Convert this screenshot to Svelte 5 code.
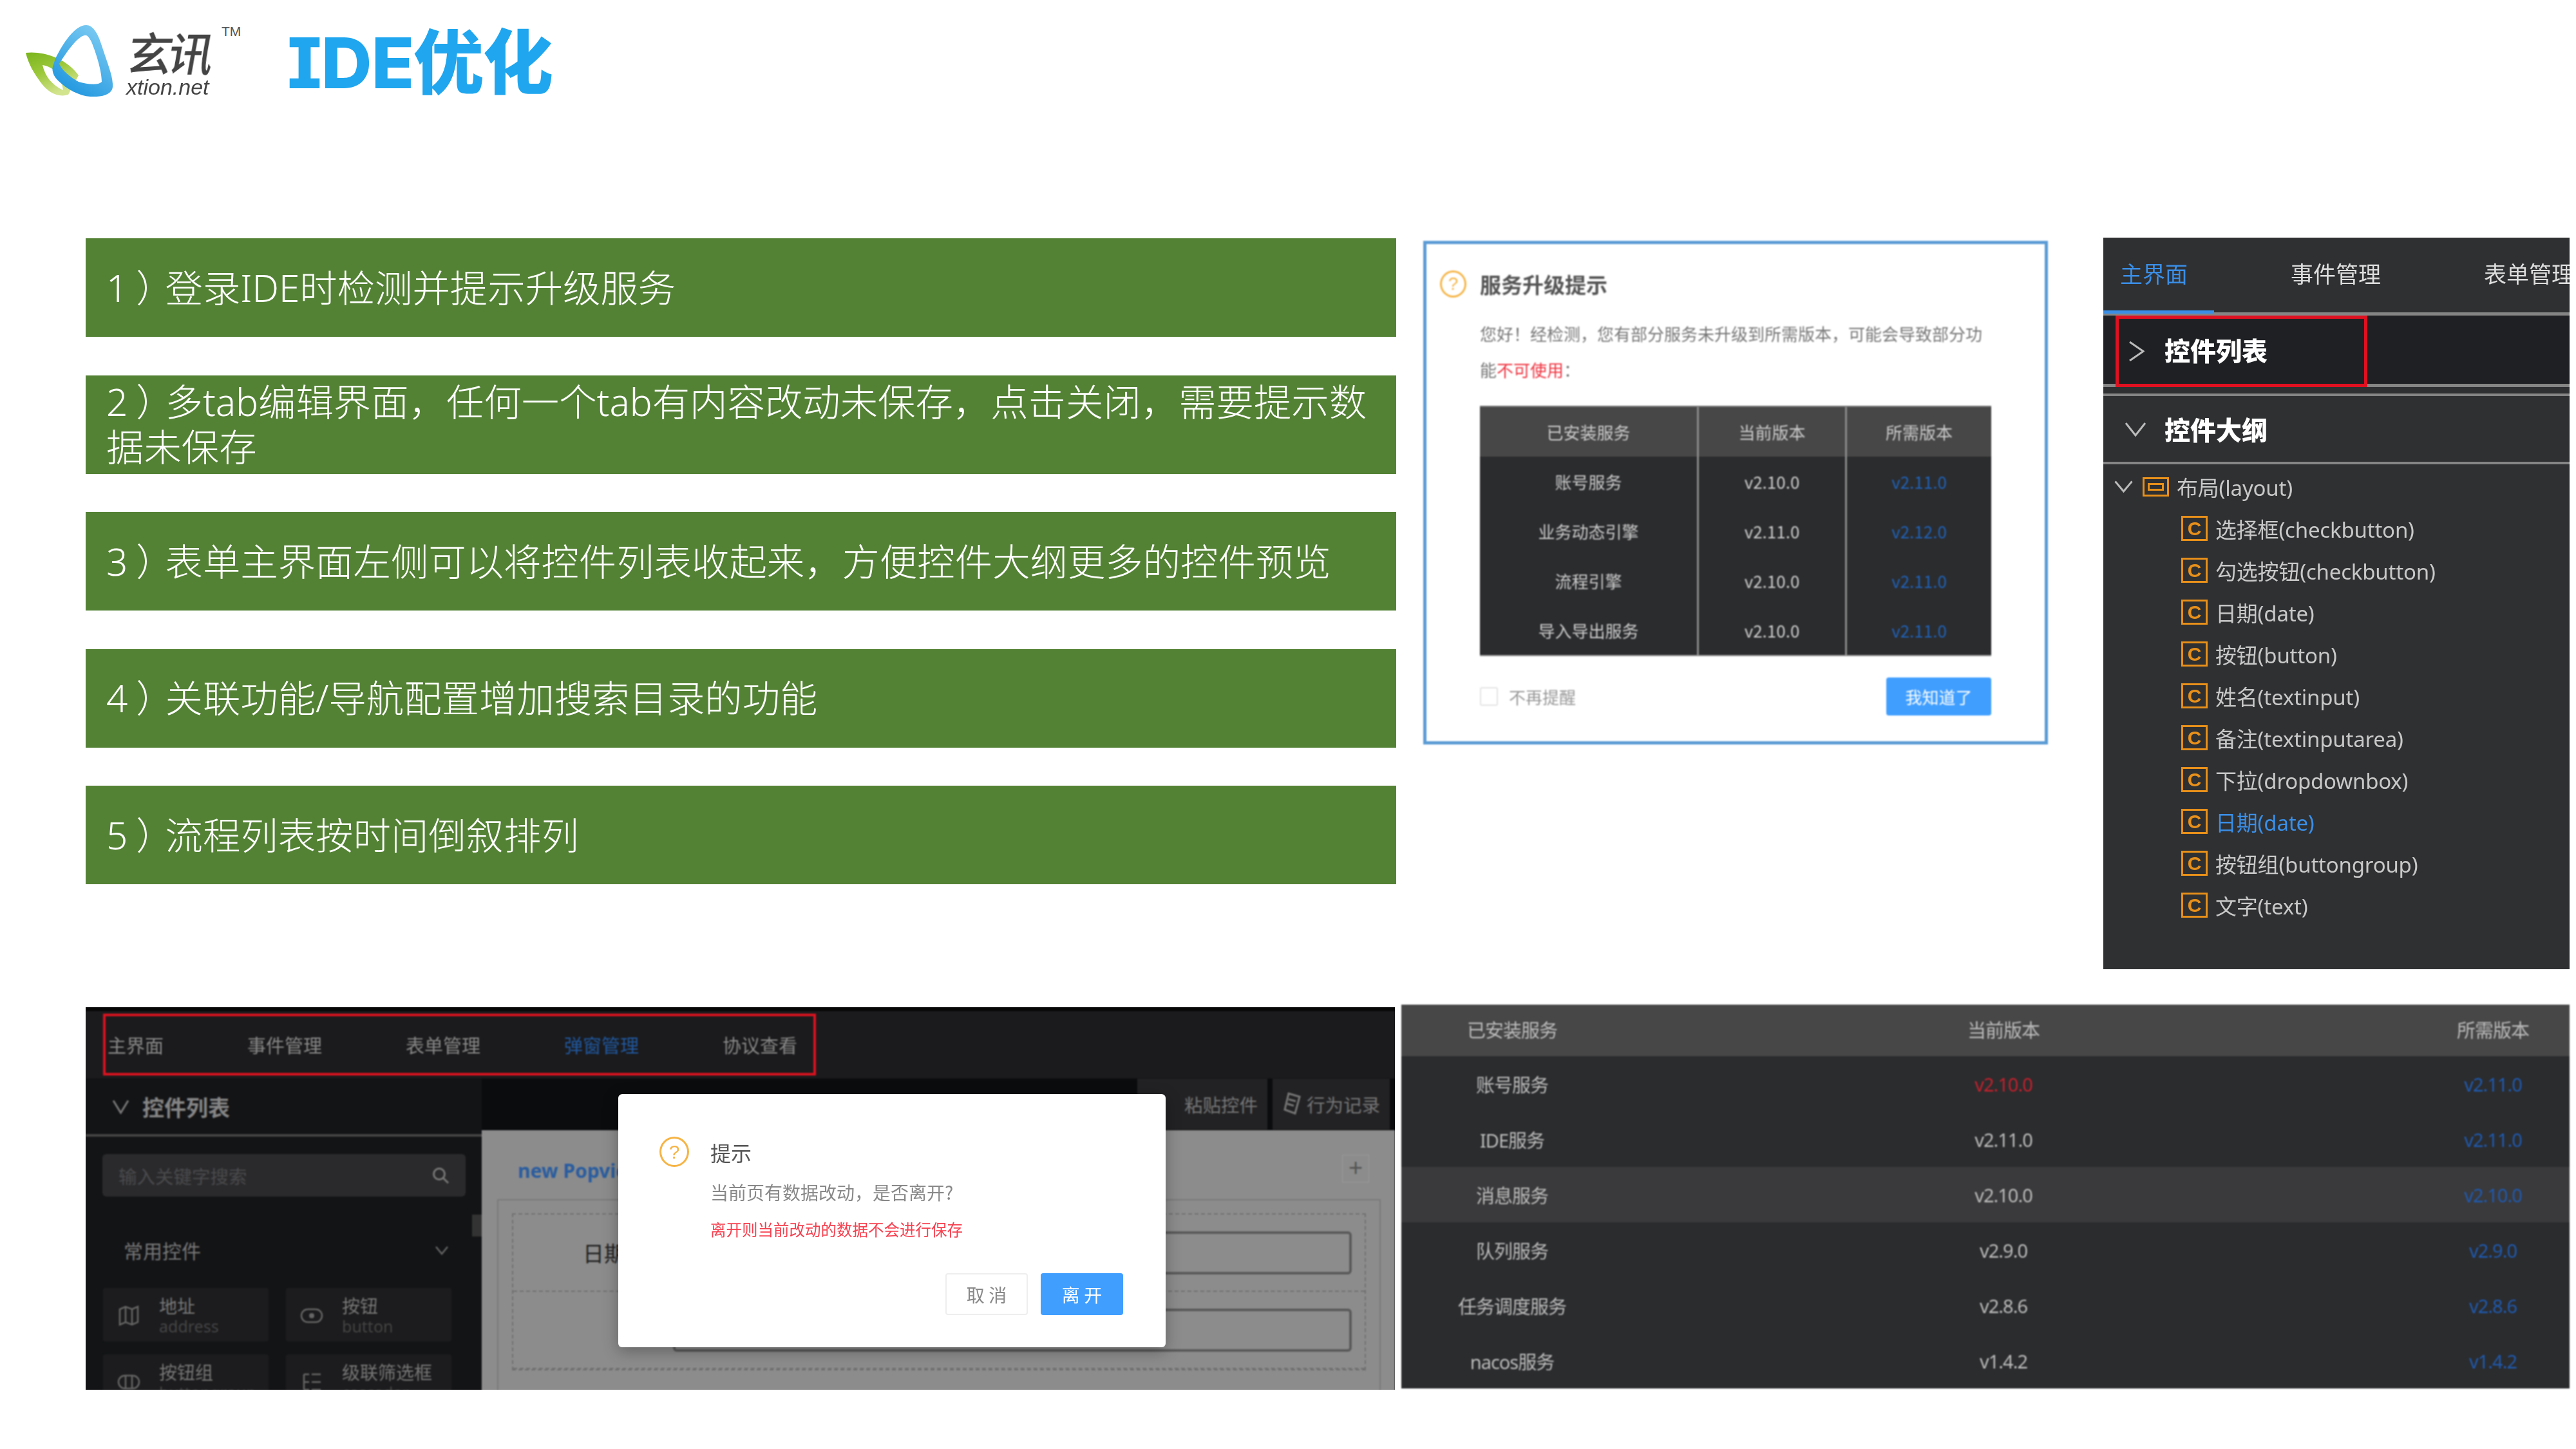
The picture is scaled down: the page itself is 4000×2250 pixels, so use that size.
<script>
  const points = [
    ['1', '登录IDE时检测并提示升级服务'],
    ['2', '多tab编辑界面，任何一个tab有内容改动未保存，点击关闭，需要提示数据未保存'],
    ['3', '表单主界面左侧可以将控件列表收起来，方便控件大纲更多的控件预览'],
    ['4', '关联功能/导航配置增加搜索目录的功能'],
    ['5', '流程列表按时间倒叙排列']
  ];
  const upgradeRows = [
    ['账号服务', 'v2.10.0', 'v2.11.0'],
    ['业务动态引擎', 'v2.11.0', 'v2.12.0'],
    ['流程引擎', 'v2.10.0', 'v2.11.0'],
    ['导入导出服务', 'v2.10.0', 'v2.11.0']
  ];
  const outline = [
    '选择框(checkbutton)', '勾选按钮(checkbutton)', '日期(date)', '按钮(button)',
    '姓名(textinput)', '备注(textinputarea)', '下拉(dropdownbox)', '日期(date)',
    '按钮组(buttongroup)', '文字(text)'
  ];
  const topTabs = ['主界面', '事件管理', '表单管理', '弹窗管理', '协议查看'];
  const cards = [
    ['地址', 'address', 'map'], ['按钮', 'button', 'btn'],
    ['按钮组', 'buttongroup', 'group'], ['级联筛选框', 'cascader', 'tree']
  ];
  const services = [
    ['账号服务', 'v2.10.0', 'v2.11.0', 'err'],
    ['IDE服务', 'v2.11.0', 'v2.11.0', ''],
    ['消息服务', 'v2.10.0', 'v2.10.0', 'hl'],
    ['队列服务', 'v2.9.0', 'v2.9.0', ''],
    ['任务调度服务', 'v2.8.6', 'v2.8.6', ''],
    ['nacos服务', 'v1.4.2', 'v1.4.2', '']
  ];
</script>

<div class="slide">
  <header class="head">
    <svg class="mark" viewBox="0 0 135 111" aria-hidden="true">
      <defs>
        <linearGradient id="gr" x1="0" y1="0" x2="0.5" y2="1">
          <stop offset="0" stop-color="#7ab51d" />
          <stop offset="0.5" stop-color="#9cc83a" />
          <stop offset="1" stop-color="#d3e48f" />
        </linearGradient>
        <linearGradient id="bl" x1="0.2" y1="1" x2="0.8" y2="0">
          <stop offset="0" stop-color="#1b93de" />
          <stop offset="1" stop-color="#7fcdf3" />
        </linearGradient>
      </defs>
      <path class="m-green" fill-rule="evenodd" d="M0 43C25 40 62 50 82 78L66 108C50 113 34 104 24 90C12 74 4 60 0 43ZM26 62C30 80 42 94 58 101L55 84C50 72 38 64 26 62Z" />
      <path class="m-blue" fill-rule="evenodd" d="M94 0C104 0 112 12 118 32C127 60 136 80 135 96C134 108 118 112 100 111C84 110 64 100 50 86C44 80 40 72 42 64L46 52C58 28 76 0 94 0ZM91 16C80 18 62 44 52 60C56 70 68 80 82 88C96 92 112 94 118 88C118 70 108 40 102 26C98 18 95 15 91 16Z" />
    </svg>
    <div class="brand">
      <span class="brand-cn">玄讯</span>
      <span class="brand-en">xtion.net</span>
    </div>
    <span class="tm">TM</span>
    <h1 class="title">IDE优化</h1>
  </header>

  <section class="upper">
    <ul class="bars">
      {#each points as p}
        <li class="bar"><div>{p[0]}<i class="par">）</i>{p[1]}</div></li>
      {/each}
    </ul>

    <article class="upgrade">
      <div class="up-head">
        <span class="q up-q">?</span>
        <strong>服务升级提示</strong>
      </div>
      <p class="up-desc">您好！经检测，您有部分服务未升级到所需版本，可能会导致部分功能<em>不可使用</em>：</p>
      <div class="up-table">
        <div class="up-row up-th"><span>已安装服务</span><span>当前版本</span><span>所需版本</span></div>
        {#each upgradeRows as r}
          <div class="up-row"><span>{r[0]}</span><span>{r[1]}</span><span class="blue">{r[2]}</span></div>
        {/each}
      </div>
      <div class="up-foot">
        <span class="check"></span>
        <span class="no-remind">不再提醒</span>
        <span class="know">我知道了</span>
      </div>
    </article>

    <aside class="panel">
      <div class="p-tabs">
        <span class="p-tab active">主界面</span>
        <span class="p-tab">事件管理</span>
        <span class="p-tab third">表单管理</span>
      </div>
      <div class="p-sec dark">
        <div class="p-red">
          <svg class="chev-r" viewBox="0 0 25 33"><path d="M2 2L23 16.500L2 31" /></svg>
          <b>控件列表</b>
        </div>
      </div>
      <div class="p-sec second">
        <svg class="chev-d" viewBox="0 0 34 23"><path d="M2 2L17 21L32 2" /></svg>
        <b>控件大纲</b>
      </div>
      <div class="tree">
        <div class="t-row root">
          <svg class="chev-s" viewBox="0 0 29 19"><path d="M1.500 1.500L14.500 17L27.500 1.500" /></svg>
          <span class="lay"><i></i></span>
          <span>布局(layout)</span>
        </div>
        {#each outline as o, i}
          <div class="t-row leaf" class:sel={i === 7}>
            <span class="c">C</span>
            <span>{o}</span>
          </div>
        {/each}
      </div>
    </aside>
  </section>

  <section class="lower">
    <div class="shot">
      <div class="s-top">
        <div class="s-red">
          {#each topTabs as t, i}
            <span class:on={i === 3}>{t}</span>
          {/each}
        </div>
      </div>
      <div class="s-body">
        <div class="side">
          <div class="side-h">
            <svg viewBox="0 0 27 23"><path d="M2 2L13.500 21L25 2" /></svg>
            <b>控件列表</b>
          </div>
          <div class="search">
            <span>输入关键字搜索</span>
            <svg viewBox="0 0 27 27"><circle cx="11" cy="11" r="8.500" /><path d="M17 17L25 25" /></svg>
          </div>
          <div class="common">
            <span>常用控件</span>
            <svg viewBox="0 0 22 15"><path d="M2 2L11 13L20 2" /></svg>
          </div>
          <div class="cards">
            {#each cards as c}
              <div class="card">
                <svg class="card-i" viewBox="0 0 36 36">
                  {#if c[2] === 'map'}
                    <path d="M4 8L13 4L23 8L32 4V28L23 32L13 28L4 32ZM13 4V28M23 8V32" />
                  {:else if c[2] === 'btn'}
                    <rect x="2" y="8" width="32" height="20" rx="10" /><circle cx="18" cy="18" r="4" class="fill" />
                  {:else if c[2] === 'group'}
                    <rect x="2" y="8" width="32" height="20" rx="10" /><path d="M13 8V28M23 8V28" />
                  {:else}
                    <path d="M6 6H14M6 6V30M6 18H14M6 30H14M18 6H32M18 18H32M18 30H32" />
                  {/if}
                </svg>
                <div class="card-t"><span>{c[0]}</span><small>{c[1]}</small></div>
              </div>
            {/each}
          </div>
          <span class="thumb"></span>
        </div>
        <div class="work">
          <div class="tools">
            <span class="tool wide">粘贴控件</span>
            <span class="tool">
              <svg viewBox="0 0 30 40"><path d="M10 3L27 8L20 34L4 28ZM10 12L21 15M8 19L18 22" /></svg>
              行为记录
            </span>
          </div>
          <div class="canvas">
            <div class="canvas-h">
              <b>new Popview</b>
              <span class="plus">+</span>
            </div>
            <div class="frame">
              <div class="dash">
                <div class="f-row"><span class="f-label">日期</span><span class="f-input"></span></div>
                <div class="f-row"><span class="f-label"></span><span class="f-input"></span></div>
              </div>
            </div>
          </div>
        </div>
      </div>
      <div class="modal">
        <div class="m-head"><span class="q m-q">?</span><span>提示</span></div>
        <p class="m-text">当前页有数据改动，是否离开?</p>
        <p class="m-warn">离开则当前改动的数据不会进行保存</p>
        <div class="m-btns">
          <span class="m-cancel">取 消</span>
          <span class="m-ok">离 开</span>
        </div>
      </div>
    </div>

    <div class="svc">
      <div class="svc-row svc-th"><span>已安装服务</span><span>当前版本</span><span>所需版本</span></div>
      {#each services as s}
        <div class="svc-row" class:hl={s[3] === 'hl'}>
          <span>{s[0]}</span>
          <span class:red={s[3] === 'err'}>{s[1]}</span>
          <span class="blue">{s[2]}</span>
        </div>
      {/each}
    </div>
  </section>
</div>

<style>
  :global(body) { margin: 0; background: #fff; }
  .slide {
    width: 4000px; height: 2250px; overflow: hidden; background: #fff; position: relative;
    font-family: "Noto Sans", "Noto Sans CJK SC", sans-serif; color: #ccc;
  }
  p, h1, ul { margin: 0; padding: 0; }
  span, b, strong, small { display: block; }

  /* header */
  .head { height: 370px; box-sizing: border-box; padding: 39px 0 0 40px; display: flex; align-items: flex-start; }
  .mark { width: 135px; height: 111px; flex: none; filter: blur(.6px); }
  .m-green { fill: url(#gr); }
  .m-blue { fill: url(#bl); }
  .brand { margin-left: 21px; display: flex; flex-direction: column; width: 135px; }
  .brand-cn {
    font: 500 70px/82px "Noto Sans CJK SC", sans-serif; color: #444; margin-left: 3px;
    letter-spacing: -6px; transform: skewX(-10deg); filter: blur(.6px); white-space: nowrap;
  }
  .brand-en { font: italic 400 34px/32px "Liberation Sans", sans-serif; color: #444; margin-top: -2px; filter: blur(.5px); }
  .tm { font: 400 21px/20px "Liberation Sans", sans-serif; color: #555; margin-left: 13px; }
  .title {
    margin-left: 72px; margin-top: 2px;
    font: 800 109px/112px Inter, "Noto Sans CJK SC", sans-serif; font-feature-settings: "cv08", "ss02";
    color: #1fa6ee; letter-spacing: -1px; white-space: nowrap;
  }

  /* upper */
  .upper { display: flex; align-items: flex-start; padding-left: 133px; height: 1190px; }
  .bars { list-style: none; width: 2035px; display: flex; flex-direction: column; gap: 59.500px; flex: none; }
  .bar {
    height: 153px; box-sizing: border-box; padding: 0 20px 0 32px; background: #548235; color: #fff;
    display: flex; align-items: center;
    font: 300 58.400px/70px "Noto Sans", "Noto Sans CJK SC", sans-serif;
  }
  .par { font-style: normal; display: inline-block; font-feature-settings: "halt"; margin: 0 16px 0 13px; }

  .upgrade {
    width: 970px; height: 782px; box-sizing: border-box; margin: 4px 0 0 42px; flex: none;
    border: 5px solid #5b9bd5; padding: 41px 83px 0; background: #fff; filter: blur(.8px);
    font-family: "Noto Sans CJK SC", sans-serif;
  }
  .q {
    border-radius: 50%; border: 3px solid #f6b445; color: #f6b445; box-sizing: border-box;
    display: flex; align-items: center; justify-content: center; font-family: "Liberation Sans", sans-serif;
  }
  .up-head { display: flex; align-items: center; height: 42px; color: #555; font-size: 33px; position: relative; }
  .up-q { position: absolute; left: -62px; width: 41px; height: 42px; font-size: 28px; }
  .up-desc { margin-top: 28px; width: 800px; font-size: 26px; line-height: 56px; color: #777; }
  .up-desc em { font-style: normal; color: #ef3340; }
  .up-table { margin-top: 28px; width: 794px; border-top: 2px solid #777; border-bottom: 2px solid #999; }
  .up-row {
    display: grid; grid-template-columns: 337px 230px 227px; height: 77px; background: #2b2c2e;
    font-size: 26px; color: #ccc;
  }
  .up-row span { display: flex; align-items: center; justify-content: center; }
  .up-row span + span { border-left: 3px solid #8a8a8a; }
  .up-th { background: #474747; }
  .blue { color: #1f62b8; }
  .up-foot { display: flex; align-items: center; margin-top: 33px; font-size: 26px; }
  .check { width: 28px; height: 29px; border: 2px solid #e4e4e4; box-sizing: border-box; border-radius: 3px; }
  .no-remind { margin-left: 17px; color: #999; }
  .know {
    margin-left: auto; width: 163px; height: 59px; border-radius: 4px; background: #409eff; color: #fff;
    display: flex; align-items: center; justify-content: center;
  }

  /* panel */
  .panel {
    width: 724px; height: 1136px; margin: -1px 0 0 86px; flex: none; background: #2f3032; overflow: hidden;
    font-family: "Noto Sans", "Noto Sans CJK SC", sans-serif; filter: blur(.5px);
  }
  .p-tabs { display: flex; height: 121px; box-sizing: border-box; border-bottom: 5px solid #858585; font-size: 35px; color: #ddd; font-family: "Noto Sans CJK SC", sans-serif; white-space: nowrap; }
  .p-tab { padding: 29px 0 0 119px; height: 121px; box-sizing: border-box; flex: none; }
  .p-tab.third { padding-left: 160px; }
  .p-tab.active { padding: 29px 41px 0 26px; color: #3a8ee6; border-bottom: 5px solid #3a8ee6; height: 118px; }
  .p-sec { display: flex; align-items: center; color: #fff; font: 700 40px "Noto Sans CJK SC", sans-serif; }
  .p-sec.dark { background: #1f2023; height: 106px; border-bottom: 5px solid #858585; }
  .p-red {
    width: 391px; height: 111px; box-sizing: border-box; margin: 5px 0 0 19px; border: 5px solid #e01020;
    display: flex; align-items: center; padding-left: 15px; position: relative; z-index: 1;
  }
  .p-red b { margin-left: 31px; margin-top: -6px; }
  .chev-r { width: 25px; height: 33px; flex: none; }
  .chev-d { width: 34px; height: 23px; flex: none; margin: 0 28px 0 33px; }
  .chev-s { width: 29px; height: 19px; flex: none; margin: 0 15px 0 17px; }
  .chev-r path, .chev-d path, .chev-s path, .side-h path, .common path, .tool path, .card-i path, .card-i rect { fill: none; }
  .chev-r path, .chev-d path, .chev-s path { stroke: #bbb; stroke-width: 3; }
  .p-sec.second { margin-top: 10px; height: 110px; box-sizing: border-box; border-top: 4px solid #858585; border-bottom: 4px solid #858585; }
  .tree { padding-top: 2px; }
  .t-row { height: 65px; display: flex; align-items: center; font-size: 33px; color: #c8c8c8; white-space: nowrap; letter-spacing: -.2px; }
  .lay { width: 41px; height: 30px; box-sizing: border-box; border: 3px solid #e8901a; display: flex; align-items: center; justify-content: center; margin-right: 12px; flex: none; }
  .lay i { display: block; width: 25px; height: 12px; border: 3px solid #e8901a; box-sizing: border-box; }
  .leaf { padding-left: 121px; }
  .c {
    width: 41px; height: 39px; box-sizing: border-box; border: 3px solid #e8901a; color: #e8901a; flex: none;
    display: flex; align-items: center; justify-content: center; margin-right: 12px;
    font: 700 30px "Liberation Sans", sans-serif;
  }
  .sel { color: #3a8ee6; }

  /* lower */
  .lower { display: flex; align-items: flex-start; padding-left: 133px; }
  .shot {
    width: 2033px; height: 594px; margin-top: 4px; position: relative; overflow: hidden; flex: none;
    background: #131416; font-family: "Noto Sans CJK SC", sans-serif;
  }
  .s-top { height: 111px; box-sizing: border-box; background: #1b1b1d; border-top: 6px solid #060607; padding: 4px 0 0 27px; filter: blur(.8px); }
  .s-red {
    width: 1107px; height: 96px; box-sizing: border-box; border: 4px solid #d9121f; display: flex; align-items: center;
    gap: 130px; padding-left: 3px; font-size: 29px; color: #888; white-space: nowrap;
  }
  .s-red .on { color: #20589f; }
  .s-body { display: flex; height: 483px; filter: blur(1px); }
  .side { width: 615px; flex: none; background: #131416; position: relative; }
  .side-h { height: 90px; box-sizing: border-box; border-bottom: 4px solid #444; display: flex; align-items: center; padding-left: 41px; color: #858585; font-size: 34px; }
  .side-h svg { width: 27px; height: 23px; margin-right: 20px; }
  .side-h path { stroke: #777; stroke-width: 3; }
  .search {
    margin: 27px 25px 0 26px; height: 66px; background: #2a2a2c; border-radius: 6px; display: flex; align-items: center;
    padding: 0 25px; justify-content: space-between; color: #4a4a4c; font-size: 28.500px;
  }
  .search svg { width: 27px; height: 27px; }
  .search circle, .search path { fill: none; stroke: #777; stroke-width: 3; }
  .common { margin: 50px 51px 0 59px; height: 66px; display: flex; align-items: center; justify-content: space-between; color: #777; font-size: 30px; }
  .common svg { width: 22px; height: 15px; }
  .common path { stroke: #666; stroke-width: 2.500; }
  .cards { margin: 26px 0 0 27px; display: grid; grid-template-columns: 257px 257px; column-gap: 27px; row-gap: 20px; grid-auto-rows: 83px; }
  .card { background: #1c1c1e; border-radius: 4px; display: flex; align-items: center; padding-left: 22px; gap: 29px; padding-top: 2px; box-sizing: border-box; }
  .card-i { width: 36px; height: 36px; flex: none; }
  .card-i path, .card-i rect { stroke: #666; stroke-width: 2.500; }
  .card-i .fill { fill: #666; }
  .card-t { color: #777; font-size: 28px; line-height: 32px; white-space: nowrap; }
  .card-t small { color: #444; font-size: 25px; font-family: "Noto Sans", sans-serif; }
  .thumb { position: absolute; right: 0; top: 211px; width: 15px; height: 34px; background: #333; }
  .work { flex: 1; display: flex; flex-direction: column; background: #0b0c0e; }
  .tools { height: 80px; flex: none; display: flex; justify-content: flex-end; gap: 8px; padding-right: 8px; }
  .tool { height: 79px; background: #222224; color: #777; font-size: 28.500px; display: flex; align-items: center; padding: 0 15px; gap: 8px; }
  .tool.wide { width: 202px; box-sizing: border-box; justify-content: flex-end; }
  .tool svg { width: 30px; height: 40px; }
  .tool path { stroke: #777; stroke-width: 3; }
  .canvas { flex: 1; background: #8c8c8c; padding: 0 22px 0 24px; }
  .canvas-h { height: 107px; display: flex; justify-content: space-between; align-items: flex-start; padding: 38px 18px 0 32px; box-sizing: border-box; }
  .canvas-h b { color: #2a5d9f; font: 700 30px/50px "Noto Sans", sans-serif; }
  .plus { width: 40px; height: 41px; border: 1px solid #9a9a9a; color: #555; font: 400 38px/38px "Liberation Sans", sans-serif; text-align: center; }
  .frame { border: 2px solid #7a7a7a; border-bottom: 0; padding: 20px 21px 0; height: 300px; box-sizing: border-box; }
  .dash { border: 2px dashed #707070; }
  .f-row { height: 120px; border-bottom: 2px dashed #707070; box-sizing: border-box; display: flex; align-items: center; }
  .f-label { width: 122px; padding-left: 108px; box-sizing: content-box; color: #222; font-size: 33px; }
  .f-input { margin-left: 18px; flex: 1; height: 67px; margin-right: 20px; box-sizing: border-box; border: 4px solid #5a5a5a; border-radius: 6px; }

  .modal {
    position: absolute; left: 827px; top: 135px; width: 850px; height: 393px; box-sizing: border-box; background: #fff;
    border-radius: 6px; box-shadow: 0 6px 24px rgba(0, 0, 0, .3); padding: 66px 66px 0 64px; filter: blur(.7px);
  }
  .m-head { display: flex; align-items: center; gap: 33px; color: #555; font-size: 32px; height: 47px; }
  .m-q { width: 46px; height: 47px; font-size: 30px; }
  .m-text { margin: 17px 0 0 79px; color: #888; font-size: 28px; line-height: 44px; white-space: nowrap; }
  .m-warn { margin: 16px 0 0 79px; color: #f6404f; font-size: 24.500px; line-height: 40px; white-space: nowrap; }
  .m-btns { display: flex; justify-content: flex-end; gap: 20px; margin-top: 48px; }
  .m-btns span { width: 128px; height: 65px; box-sizing: border-box; display: flex; align-items: center; justify-content: center; font-size: 28px; border-radius: 4px; }
  .m-cancel { border: 2px solid #eee; color: #888; }
  .m-ok { background: #409eff; color: #fff; }

  .svc { width: 1814px; margin-left: 10px; flex: none; background: #2b2c2e; filter: blur(.8px); font-family: "Noto Sans", "Noto Sans CJK SC", sans-serif; }
  .svc-row { display: grid; grid-template-columns: 344px 1182px 288px; height: 86px; font-size: 29px; color: #bbb; letter-spacing: -1px; }
  .svc-row span { display: flex; align-items: center; justify-content: center; }
  .svc-row span:last-child { padding-left: 50px; }
  .svc-th { height: 80px; background: #474747; padding-bottom: 4px; box-sizing: border-box; }
  .svc-row.hl { background: #3a3a3c; }
  .svc-row .red { color: #c4202c; }
  .svc-row .blue { color: #1f5ab0; }
</style>
